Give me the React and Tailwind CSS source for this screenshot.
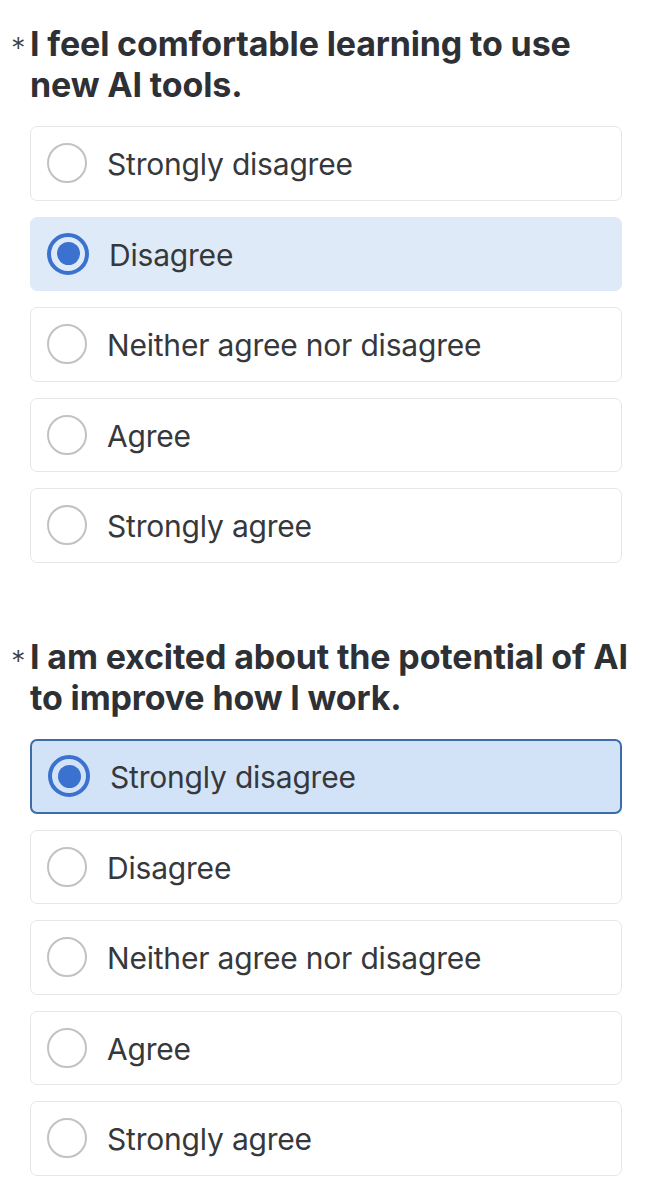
import React from "react";

const OPTIONS = [
  "Strongly disagree",
  "Disagree",
  "Neither agree nor disagree",
  "Agree",
  "Strongly agree",
];

function Radio({ checked }) {
  if (checked) {
    return (
      <span className="flex h-[42px] w-[42px] shrink-0 items-center justify-center rounded-full border-[4px] border-[#3b71cf]">
        <span className="h-[23px] w-[23px] rounded-full bg-[#3b71cf]" />
      </span>
    );
  }
  return (
    <span className="h-[40px] w-[40px] shrink-0 rounded-full border-[2px] border-[#c2c2c2]" />
  );
}

function Option({ label, checked, focused }) {
  let cls = "flex h-[74.5px] items-center rounded-[7px] pl-[16px] ";
  if (checked && focused) cls += "border-[2px] border-[#3d6ca8] bg-[#d3e3f7]";
  else if (checked) cls += "border-[1.5px] border-[#dfeaf8] bg-[#dfeaf8]";
  else cls += "border-[1.5px] border-[#e6e6e6] bg-white";
  return (
    <div className={cls}>
      <Radio checked={checked} />
      <span className="ml-[20px] pt-[2px] text-[30px] leading-none tracking-[-0.2px] text-[#36383c]">
        {label}
      </span>
    </div>
  );
}

function Question({ title, selected, focused }) {
  return (
    <div className="flex flex-col">
      <div className="-mr-[24px] flex">
        <span className="-ml-[19px] w-[19px] shrink-0 pt-[4px] text-[29px] font-light leading-[41px] text-[#3d3f43]">
          *
        </span>
        <h2 className="text-[34px] font-bold leading-[41px] tracking-[-0.15px] text-[#2d3035]">
          {title}
        </h2>
      </div>
      <div className="mt-[21px] flex flex-col gap-[16px]">
        {OPTIONS.map((o, i) => (
          <Option key={o} label={o} checked={i === selected} focused={focused} />
        ))}
      </div>
    </div>
  );
}

export default function App() {
  return (
    <div className="min-h-[1200px] bg-white pl-[30px] pr-[43px] pt-[23px] font-[Inter,sans-serif]">
      <Question
        title="I feel comfortable learning to use new AI tools."
        selected={1}
      />
      <div className="h-[73.5px]" />
      <Question
        title="I am excited about the potential of AI to improve how I work."
        selected={0}
        focused
      />
    </div>
  );
}
